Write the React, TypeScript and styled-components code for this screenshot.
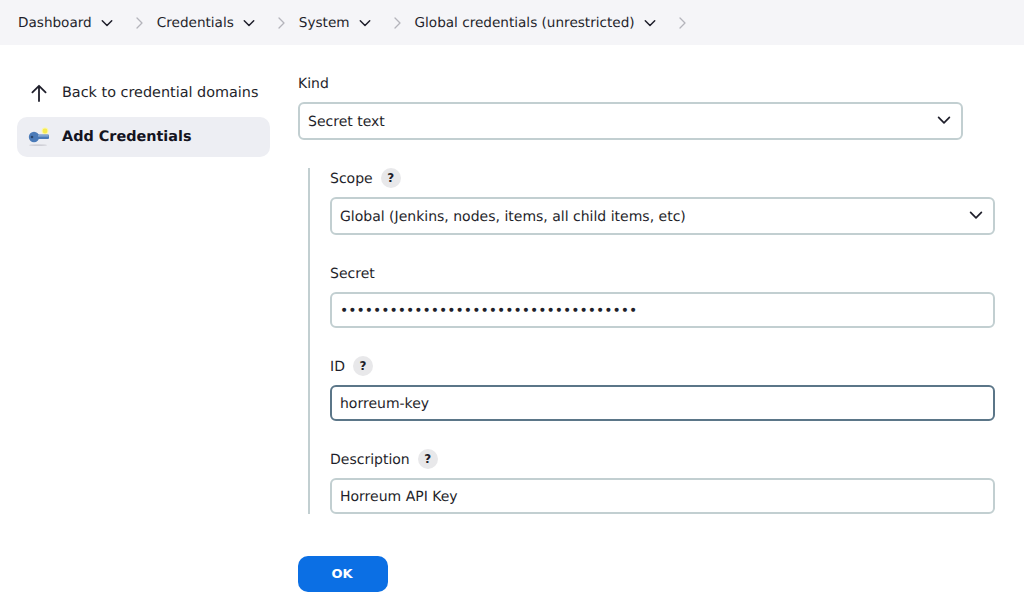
import styled, { createGlobalStyle } from "styled-components";

const GlobalStyle = createGlobalStyle`
  html, body {
    margin: 0;
    padding: 0;
    background: #fff;
    color: #14141f;
    font-family: "DejaVu Sans", sans-serif;
    font-size: 14px;
    text-rendering: geometricPrecision;
  }
  body {
    overflow: hidden;
    height: 616px;
  }
`;

const crumbs = [
  "Dashboard",
  "Credentials",
  "System",
  "Global credentials (unrestricted)",
];

const Chevron = ({ size = 16 }: { size?: number }) => (
  <svg width={size} height={size} viewBox="0 0 16 16" fill="none">
    <path
      d="M2.6 5.4 8 10.8l5.4-5.4"
      stroke="#1f1f2b"
      strokeWidth="1.7"
      strokeLinecap="round"
      strokeLinejoin="round"
    />
  </svg>
);

const Separator = () => (
  <svg width="7" height="12" viewBox="0 0 7 12" fill="none">
    <path
      d="M1 1l5 5-5 5"
      stroke="#b4b4bb"
      strokeWidth="1.3"
      strokeLinecap="round"
      strokeLinejoin="round"
    />
  </svg>
);

const KeyIcon = () => (
  <svg width="24" height="24" viewBox="0 0 24 24">
    <ellipse cx="11" cy="20.2" rx="9" ry="0.9" fill="#cfcfd6" />
    <circle cx="18" cy="6" r="3.4" fill="#fbf6a8" />
    <circle cx="18" cy="6" r="2.4" fill="#f5ea4e" />
    <circle cx="7" cy="12" r="5.2" fill="#4a7ab8" />
    <rect x="10" y="9.6" width="12" height="4.4" rx="1" fill="#4a7ab8" />
    <rect x="11" y="10.4" width="10.5" height="1" fill="#a6c0de" />
    <circle cx="5" cy="12" r="1.3" fill="#27456d" />
  </svg>
);

const BackArrow = () => (
  <svg width="24" height="24" viewBox="0 0 24 24" fill="none">
    <path
      d="M12 20V5M5.4 11.4 12 4.8l6.6 6.6"
      stroke="#1f1f2b"
      strokeWidth="1.8"
      strokeLinecap="round"
      strokeLinejoin="round"
    />
  </svg>
);

const App = () => {
  return (
    <>
      <GlobalStyle />
      <Breadcrumbs>
        {crumbs.map((crumb) => (
          <Crumb key={crumb}>
            <CrumbLabel>{crumb}</CrumbLabel>
            <Chevron size={14} />
            <SeparatorSlot>
              <Separator />
            </SeparatorSlot>
          </Crumb>
        ))}
      </Breadcrumbs>
      <Page>
        <Sidebar>
          <SideLink>
            <SideIcon>
              <BackArrow />
            </SideIcon>
            Back to credential domains
          </SideLink>
          <SideLink $active>
            <SideIcon>
              <KeyIcon />
            </SideIcon>
            Add Credentials
          </SideLink>
        </Sidebar>
        <Main>
          <KindLabel>Kind</KindLabel>
          <SelectBox>
            <SelectInput defaultValue="secret">
              <option value="secret">Secret text</option>
            </SelectInput>
            <SelectArrow>
              <Chevron />
            </SelectArrow>
          </SelectBox>
          <Nested>
            <Field>
              <FieldLabel>
                <LabelText>Scope</LabelText> <Help>?</Help>
              </FieldLabel>
              <SelectBox>
                <SelectInput defaultValue="global">
                  <option value="global">
                    Global (Jenkins, nodes, items, all child items, etc)
                  </option>
                </SelectInput>
                <SelectArrow>
                  <Chevron />
                </SelectArrow>
              </SelectBox>
            </Field>
            <Field>
              <FieldLabel>
                <LabelText>Secret</LabelText>
              </FieldLabel>
              <TextInput
                type="password"
                readOnly
                value="000000000000000000000000000000000000"
              />
            </Field>
            <Field>
              <FieldLabel>
                <LabelText>ID</LabelText> <Help>?</Help>
              </FieldLabel>
              <TextInput $focused readOnly value="horreum-key" />
            </Field>
            <Field>
              <FieldLabel>
                <LabelText>Description</LabelText> <Help>?</Help>
              </FieldLabel>
              <TextInput readOnly value="Horreum API Key" />
            </Field>
          </Nested>
          <OkButton>OK</OkButton>
        </Main>
      </Page>
    </>
  );
};

export default App;

const Breadcrumbs = styled.nav`
  box-sizing: border-box;
  height: 45px;
  display: flex;
  align-items: center;
  padding-left: 18px;
  background-color: #f5f5f8;
`;

const Crumb = styled.div`
  display: flex;
  align-items: center;
`;

const CrumbLabel = styled.span`
  margin-right: 8px;
  font-size: 13.6px;
  color: #1f1f2b;
`;

const SeparatorSlot = styled.span`
  display: flex;
  width: 7px;
  margin: 0 14px 0 22px;
`;

const Page = styled.div`
  display: flex;
  align-items: flex-start;
  padding: 28px 29px 0 17px;
`;

const Sidebar = styled.aside`
  width: 253px;
  flex-shrink: 0;
  margin-right: 28px;
  display: flex;
  flex-direction: column;
`;

const SideLink = styled.a<{ $active?: boolean }>`
  height: 40px;
  margin-bottom: 4px;
  padding-left: 10px;
  display: flex;
  align-items: center;
  gap: 11px;
  border-radius: 10px;
  font-size: 14.4px;
  font-weight: ${({ $active }) => ($active ? 700 : 400)};
  color: ${({ $active }) => ($active ? "#14141f" : "#1f1f2b")};
  background-color: ${({ $active }) => ($active ? "#edeef3" : "transparent")};
`;

const SideIcon = styled.span`
  width: 24px;
  height: 24px;
  display: flex;
`;

const Main = styled.main`
  flex: 1;
  min-width: 0;
  padding-right: 32px;
`;

const KindLabel = styled.label`
  display: block;
  height: 17px;
  line-height: 17px;
  margin: 3px 0 9px;
  color: #1f1f2b;
`;

const SelectBox = styled.div`
  position: relative;
`;

const SelectInput = styled.select`
  display: block;
  width: 100%;
  height: 38px;
  padding: 2px 8px 0;
  appearance: none;
  background: #fff;
  border: 2px solid #c2cfd1;
  border-radius: 6px;
  color: #1f1f2b;
  font-family: inherit;
  font-size: 14px;
  text-rendering: geometricPrecision;
`;

const SelectArrow = styled.span`
  position: absolute;
  top: 10px;
  right: 11px;
  display: flex;
  pointer-events: none;
`;

const Nested = styled.section`
  margin: 28px -32px 42px 10px;
  padding-left: 20px;
  border-left: 2px solid #c2cfd1;
  display: flex;
  flex-direction: column;
  gap: 28px;
`;

const Field = styled.div`
  display: flex;
  flex-direction: column;
`;

const FieldLabel = styled.label`
  height: 20px;
  margin-bottom: 9px;
  display: flex;
  align-items: center;
  gap: 8px;
  color: #1f1f2b;
`;

const LabelText = styled.span`
  padding-top: 2px;
`;

const Help = styled.span`
  width: 20px;
  height: 20px;
  display: flex;
  align-items: center;
  justify-content: center;
  border-radius: 50%;
  background-color: #e8e8ea;
  font-size: 12px;
  font-weight: 700;
`;

const TextInput = styled.input<{ $focused?: boolean }>`
  box-sizing: border-box;
  display: block;
  width: 100%;
  height: 36px;
  padding: 2px 8px 0;
  background: #fff;
  border: 2px solid ${({ $focused }) => ($focused ? "#5b7688" : "#c2cfd1")};
  border-radius: 6px;
  color: #1f1f2b;
  font-family: inherit;
  font-size: 14px;
  outline: none;
  text-rendering: geometricPrecision;
`;

const OkButton = styled.button`
  display: block;
  width: 90px;
  height: 36px;
  padding: 0 2px 2px 0;
  border: none;
  border-radius: 10px;
  background-color: #0b6fe4;
  color: #fff;
  font-family: inherit;
  font-size: 13px;
  font-weight: 700;
`;
